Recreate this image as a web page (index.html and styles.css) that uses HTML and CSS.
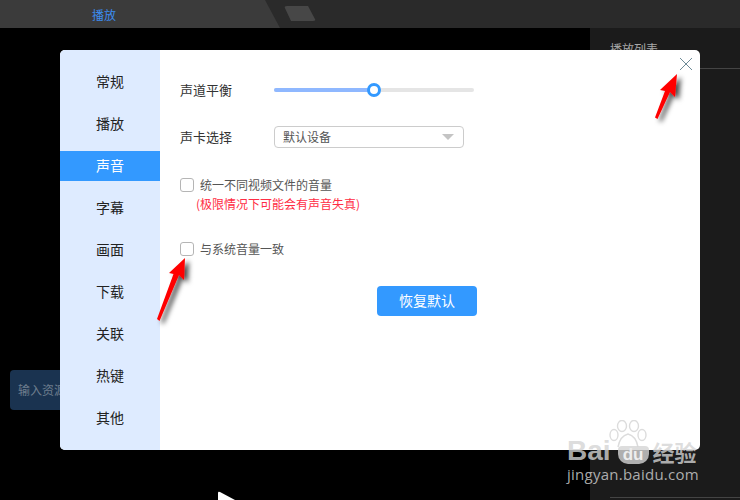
FILE: index.html
```html
<!DOCTYPE html>
<html lang="zh-CN">
<head>
    <meta charset="UTF-8">
    <title>设置</title>
    <link rel="stylesheet" href="styles.css">
</head>
<body>
    <div class="app">
        <div class="topbar">
            <div class="tab">播放</div>
            <div class="tab-shape"></div>
        </div>
        <div class="main">
            <div class="player">
                <div class="source-input">输入资源</div>
                <svg class="play-icon" width="20" height="10" viewBox="0 0 20 10"><path d="M1 3 Q1 1 3 2 L18 10 L1 10 Z" fill="#fff"/></svg>
            </div>
            <div class="playlist">
                <div class="playlist-title">播放列表</div>
                <div class="playlist-end"></div>
            </div>
        </div>
    </div>

    <div class="dialog">
        <div class="sidebar">
            <div class="nav-item">常规</div>
            <div class="nav-item">播放</div>
            <div class="nav-item active">声音</div>
            <div class="nav-item">字幕</div>
            <div class="nav-item">画面</div>
            <div class="nav-item">下载</div>
            <div class="nav-item">关联</div>
            <div class="nav-item">热键</div>
            <div class="nav-item">其他</div>
        </div>
        <div class="content">
            <div class="row balance-row">
                <div class="row-label">声道平衡</div>
                <div class="slider">
                    <div class="slider-fill"></div>
                    <div class="slider-knob"></div>
                </div>
            </div>
            <div class="row card-row">
                <div class="row-label">声卡选择</div>
                <div class="select">
                    <span>默认设备</span>
                    <div class="select-arrow"></div>
                </div>
            </div>
            <div class="check-row first-check">
                <div class="checkbox"></div>
                <span>统一不同视频文件的音量</span>
            </div>
            <div class="warning">(极限情况下可能会有声音失真)</div>
            <div class="check-row second-check">
                <div class="checkbox"></div>
                <span>与系统音量一致</span>
            </div>
            <button class="reset">恢复默认</button>
        </div>
        <svg class="close" width="14" height="14" viewBox="0 0 14 14"><path d="M1 1 L13 13 M13 1 L1 13" stroke="#6d8a96" stroke-width="1" fill="none"/></svg>
    </div>

    <!-- red arrows drawn over the screenshot -->
    <svg class="arrows" width="740" height="500" viewBox="0 0 740 500">
        <defs>
            <filter id="arrow-shadow" x="-50%" y="-50%" width="200%" height="200%">
                <feDropShadow dx="4" dy="3" stdDeviation="2.5" flood-color="#000" flood-opacity="0.7"/>
            </filter>
        </defs>
        <g fill="#f00" filter="url(#arrow-shadow)">
            <path d="M677 74 L675 97 L670 92 L657.5 119 L655 117.5 L665 91 L660 90 Z"/>
            <path d="M185 258 L184 280 L179 275 L159.5 321 L157 319 L173.5 274 L169 273 Z"/>
        </g>
    </svg>

    <div class="watermark">
        <svg class="paw" width="42" height="32" viewBox="0 0 42 32">
            <g fill="none" stroke="#dcdcdc" stroke-width="1.4">
                <ellipse cx="7" cy="15" rx="4" ry="5.5"/>
                <ellipse cx="15" cy="6" rx="4.5" ry="5.5"/>
                <ellipse cx="27" cy="6" rx="4.5" ry="5.5"/>
                <ellipse cx="35" cy="15" rx="4" ry="5.5"/>
                <path d="M11 27 Q13 16 21 14 Q29 16 31 27"/>
            </g>
        </svg>
        <div class="brand">
            <span class="brand-bai">Bai</span>
            <span class="brand-du">du</span>
            <span class="brand-cn">经验</span>
        </div>
        <div class="site">jingyan.baidu.com</div>
    </div>
</body>
</html>
```

FILE: styles.css
```css
* {
    margin: 0;
    padding: 0;
    box-sizing: border-box;
}

body {
    width: 740px;
    height: 500px;
    overflow: hidden;
    position: relative;
    background: #000;
    font-family: "Noto Sans CJK SC", "Noto Sans", sans-serif;
}

.app {
    height: 500px;
    display: flex;
    flex-direction: column;
}

.topbar {
    height: 28px;
    display: flex;
    background: #2a2a2a;
}

.tab {
    width: 280px;
    padding: 6px 0 0 92px;
    font-size: 12px;
    line-height: 17px;
    color: #3b8cf0;
    background: #3b3b3b;
    clip-path: polygon(0 0, 265px 0, 280px 28px, 0 28px);
}

.tab-shape {
    width: 32px;
    height: 15px;
    margin: 6px 0 0 4px;
    background: #474747;
    border-radius: 3px;
    clip-path: polygon(0 0, 24px 0, 32px 15px, 7px 15px);
}

.main {
    flex: 1;
    display: flex;
}

.player {
    flex: 1;
    position: relative;
    background: #000;
}

.source-input {
    position: absolute;
    left: 10px;
    top: 342px;
    width: 90px;
    height: 40px;
    padding-left: 8px;
    font-size: 12px;
    line-height: 40px;
    color: #6e7e8e;
    background: #1a3350;
    border-radius: 4px;
}

.play-icon {
    position: absolute;
    left: 217px;
    top: 462px;
}

.playlist {
    width: 150px;
    position: relative;
    background: #1b1b1b;
}

.playlist-title {
    height: 41px;
    margin-left: 20px;
    padding-top: 12px;
    font-size: 12px;
    line-height: 17px;
    color: #a8a8a8;
    border-bottom: 1px solid #444;
}

.playlist-end {
    position: absolute;
    left: 20px;
    right: 0;
    bottom: 2px;
    height: 1px;
    background: #444;
}

.dialog {
    position: absolute;
    left: 60px;
    top: 50px;
    width: 640px;
    height: 400px;
    display: flex;
    background: #fff;
    border-radius: 5px;
    overflow: hidden;
}

.sidebar {
    width: 100px;
    padding-top: 17px;
    display: flex;
    flex-direction: column;
    gap: 12px;
    background: #deebff;
}

.nav-item {
    height: 30px;
    font-size: 14px;
    line-height: 28px;
    text-align: center;
    color: #222;
}

.nav-item.active {
    color: #fff;
    background: #3399ff;
}

.content {
    flex: 1;
    padding-left: 20px;
    font-size: 12px;
    color: #555;
}

.row {
    display: flex;
    align-items: center;
}

.row-label {
    width: 94px;
    padding-bottom: 2px;
    font-size: 13px;
    color: #333;
}

.balance-row {
    height: 20px;
    margin-top: 30px;
}

.card-row {
    height: 22px;
    margin-top: 26px;
}

.slider {
    width: 200px;
    height: 4px;
    position: relative;
    background: #e5e5e5;
    border-radius: 2px;
}

.slider-fill {
    width: 100px;
    height: 4px;
    background: #8fb8ff;
    border-radius: 2px;
}

.slider-knob {
    position: absolute;
    left: 93px;
    top: -5px;
    width: 14px;
    height: 14px;
    background: #fff;
    border: 3px solid #3399ff;
    border-radius: 50%;
}

.select {
    width: 190px;
    height: 22px;
    padding: 0 9px 0 8px;
    display: flex;
    align-items: center;
    justify-content: space-between;
    border: 1px solid #ccc;
    border-radius: 4px;
}

.select span {
    padding-bottom: 2px;
}

.select-arrow {
    width: 0;
    height: 0;
    border-left: 6px solid transparent;
    border-right: 6px solid transparent;
    border-top: 6px solid #c4c4c4;
}

.check-row {
    height: 16px;
    display: flex;
    align-items: center;
    gap: 6px;
}

.check-row span {
    padding-bottom: 2px;
}

.first-check {
    margin-top: 29px;
}

.second-check {
    margin-top: 29px;
}

.checkbox {
    width: 14px;
    height: 14px;
    border: 1px solid #b5b5b5;
    border-radius: 3px;
}

.warning {
    height: 17px;
    margin: 2px 0 0 16px;
    line-height: 17px;
    color: #ff2d45;
}

.reset {
    display: block;
    width: 100px;
    height: 30px;
    margin: 29px 0 0 197px;
    padding-bottom: 2px;
    font-family: inherit;
    font-size: 14px;
    color: #fff;
    background: #3399ff;
    border: none;
    border-radius: 4px;
}

.close {
    position: absolute;
    right: 7px;
    top: 7px;
}

.arrows {
    position: absolute;
    left: 0;
    top: 0;
}

.watermark {
    position: absolute;
    left: 567px;
    top: 418px;
    width: 135px;
    height: 66px;
    color: rgba(212, 212, 212, 0.8);
}

.paw {
    position: absolute;
    left: 40px;
    top: 2px;
}

.brand {
    position: absolute;
    left: 0;
    top: 20px;
    display: flex;
    align-items: flex-end;
    height: 26px;
    font-family: "Liberation Sans", sans-serif;
    font-weight: 700;
}

.brand-bai {
    font-size: 28px;
    line-height: 26px;
}

.brand-du {
    width: 31px;
    height: 18px;
    margin-left: 7px;
    font-size: 17px;
    line-height: 17px;
    text-align: center;
    color: #eee;
    background: rgba(212, 212, 212, 0.8);
    border-radius: 4px 4px 10px 10px;
}

.brand-cn {
    margin-left: 4px;
    font-family: "Noto Sans CJK SC", sans-serif;
    font-size: 22px;
    line-height: 26px;
}

.site {
    position: absolute;
    left: 0;
    top: 46px;
    font-family: "Open Sans", sans-serif;
    font-size: 15px;
    line-height: 20px;
    letter-spacing: 0.25px;
    white-space: nowrap;
}
```
